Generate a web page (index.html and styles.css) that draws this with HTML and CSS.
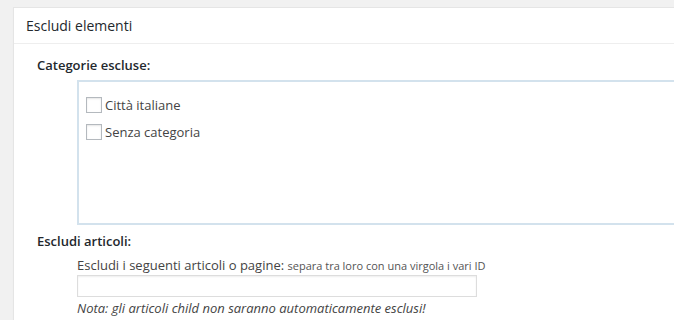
FILE: index.html
```html
<html>
  <head>
    <link rel="stylesheet" href="styles.css">
    <title>Escludi elementi</title>
  </head>
  <body>
    <div class="postbox">
      <h2 class="hndle">Escludi elementi</h2>
      <div class="inside">
        <h4 class="field-title">Categorie escluse:</h4>
        <ul class="checklist">
          <li><label><input type="checkbox"> Città italiane</label></li>
          <li><label><input type="checkbox"> Senza categoria</label></li>
        </ul>
        <h4 class="field-title">Escludi articoli:</h4>
        <div class="field">
          <label class="field-label">Escludi i seguenti articoli o pagine: <small>separa tra loro con una virgola i vari ID</small></label>
          <input type="text" class="ids">
          <p class="note">Nota: gli articoli child non saranno automaticamente esclusi!</p>
        </div>
      </div>
    </div>
  </body>
</html>
```

FILE: styles.css
```css
body {
  margin: 0;
  padding: 7px 0 0 13px;
  background: #f1f1f1;
  font-family: "Open Sans", sans-serif;
  font-size: 13px;
  color: #444;
  overflow: hidden;
}

/* box runs on past the right edge of the window */
.postbox {
  background: #fff;
  border: 1px solid #e5e5e5;
  border-right: none;
  box-shadow: 0 1px 1px rgba(0, 0, 0, 0.04);
}

.hndle {
  margin: 0;
  padding: 8px 12px;
  font-size: 14px;
  font-weight: 400;
  line-height: 19px;
  color: #23282d;
  border-bottom: 1px solid #eee;
}

.inside {
  padding: 11px 0 20px 23px;
}

.field-title {
  margin: 0;
  font-size: 13px;
  font-weight: 600;
  line-height: 20px;
  color: #23282d;
}

.checklist {
  list-style: none;
  margin: 5px 0 6px 40px;
  padding: 9px 7px 11px;
  height: 121px;
  border: 2px solid #d3e2ed;
  border-right: none;
}

.checklist li {
  height: 27px;
  display: flex;
  align-items: center;
}

.checklist label {
  display: flex;
  align-items: center;
  gap: 3px;
  color: #444;
}

.checklist input {
  appearance: none;
  margin: 0;
  width: 16px;
  height: 16px;
  border: 1px solid #b4b9be;
  background: #fff;
  box-shadow: inset 0 1px 2px rgba(0, 0, 0, 0.1);
}

.field {
  margin: 5px 0 0 40px;
}

.field-label {
  display: block;
  line-height: 19px;
  color: #444;
}

.field-label small {
  font-size: 11px;
  color: #555;
}

.ids {
  display: block;
  width: 400px;
  height: 22px;
  margin: 0;
  border: 1px solid #ddd;
  box-shadow: inset 0 1px 2px rgba(0, 0, 0, 0.07);
  font-family: inherit;
}

.note {
  margin: 1px 0 0;
  font-style: italic;
  line-height: 20px;
  color: #444;
}
```
